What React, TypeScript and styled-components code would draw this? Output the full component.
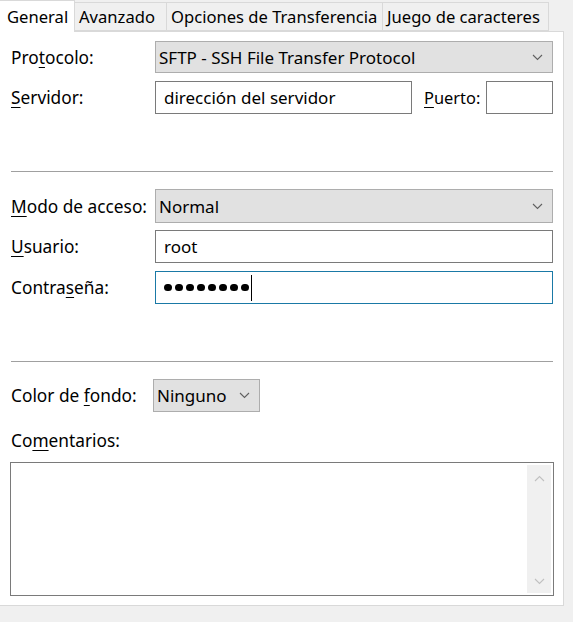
import styled, { createGlobalStyle } from 'styled-components';

const GlobalStyle = createGlobalStyle`
  html, body {
    margin: 0;
    padding: 0;
    background: #f0f0f0;
  }
  body {
    font-family: "Noto Sans", "Open Sans", "Liberation Sans", sans-serif;
    font-size: 17px;
    color: #000;
  }
`;

const Window = styled.div`
  width: 573px;
  height: 622px;
  background: #f0f0f0;
  display: flex;
  flex-direction: column;
  overflow: hidden;
`;

const TabBar = styled.div`
  display: flex;
  align-items: flex-end;
  height: 31px;
  position: relative;
  z-index: 1;
`;

const Tab = styled.div<{ $active?: boolean; $width: number }>`
  box-sizing: border-box;
  width: ${(p) => p.$width}px;
  height: ${(p) => (p.$active ? 32 : 29)}px;
  margin-bottom: ${(p) => (p.$active ? -1 : 0)}px;
  padding-left: ${(p) => (p.$active ? 7 : 4)}px;
  display: flex;
  align-items: center;
  background: ${(p) => (p.$active ? '#fff' : '#f0f0f0')};
  border: 1px solid #d9d9d9;
  border-left: ${(p) => (p.$active ? 'none' : '1px solid #d9d9d9')};
  border-bottom: ${(p) => (p.$active ? 'none' : '1px solid #d9d9d9')};
  margin-left: -1px;
  white-space: nowrap;
  font-size: 16.6px;
  color: #000;
  &:first-child {
    margin-left: 0;
  }
`;

const Panel = styled.div`
  box-sizing: border-box;
  width: 564px;
  height: 575px;
  background: #fff;
  border-top: 1px solid #d9d9d9;
  border-right: 1px solid #d9d9d9;
  border-bottom: 1px solid #d9d9d9;
  padding: 9px 10px 0 11px;
  display: flex;
  flex-direction: column;
`;

const Row = styled.div<{ $gap?: number; $height?: number }>`
  display: flex;
  align-items: center;
  height: ${(p) => p.$height ?? 33}px;
  margin-top: ${(p) => p.$gap ?? 0}px;
`;

const Label = styled.label<{ $width?: number }>`
  width: ${(p) => (p.$width ? `${p.$width}px` : 'auto')};
  flex: none;
  white-space: nowrap;
  font-size: 17.3px;
`;

const Key = styled.span`
  text-decoration: underline;
  text-underline-offset: 3px;
  text-decoration-thickness: 1px;
`;

const Combo = styled.div<{ $width?: number }>`
  box-sizing: border-box;
  height: 100%;
  flex: ${(p) => (p.$width ? 'none' : '1')};
  width: ${(p) => (p.$width ? `${p.$width}px` : 'auto')};
  background: #e1e1e1;
  border: 1px solid #adadad;
  display: flex;
  align-items: center;
  justify-content: space-between;
  padding: 0 9px 0 3px;
  font-size: 17px;
  white-space: nowrap;
`;

const TextBox = styled.div<{ $width?: number; $focused?: boolean }>`
  box-sizing: border-box;
  height: 100%;
  flex: ${(p) => (p.$width ? 'none' : '1')};
  width: ${(p) => (p.$width ? `${p.$width}px` : 'auto')};
  background: #fff;
  border: 1px solid ${(p) => (p.$focused ? '#1a79a6' : '#7a7a7a')};
  display: flex;
  align-items: center;
  padding: 0 8px;
  font-size: 17px;
  white-space: nowrap;
`;

const Dots = styled.div`
  display: flex;
  align-items: center;
  gap: 3.5px;
`;

const Dot = styled.span`
  width: 7.5px;
  height: 7.5px;
  border-radius: 50%;
  background: #000;
`;

const Caret = styled.span`
  width: 1px;
  height: 26px;
  background: #000;
  margin-left: 2px;
`;

const Separator = styled.hr<{ $top: number }>`
  border: none;
  border-top: 1px solid #a0a0a0;
  margin: ${(p) => p.$top}px 0 0 0;
  height: 0;
`;

const PortLabel = styled(Label)`
  margin: 0 6px 0 12px;
  font-size: 16.4px;
`;

const CommentsLabel = styled(Label)`
  margin-top: 17px;
  height: 24px;
  line-height: 24px;
`;

const CommentsBox = styled.div`
  box-sizing: border-box;
  margin: 9px -1px 0 -1px;
  height: 134px;
  border: 1px solid #7a7a7a;
  background: #fff;
  display: flex;
  justify-content: flex-end;
  padding: 2px 2px 2px 0;
`;

const ScrollTrack = styled.div`
  width: 24px;
  background: #f0f0f0;
  display: flex;
  flex-direction: column;
  justify-content: space-between;
  align-items: center;
  padding: 10px 0 8px;
`;

const Chevron = ({ up, color = '#606060' }: { up?: boolean; color?: string }) => (
  <svg width="11" height="7" viewBox="0 0 11 7" fill="none">
    <path
      d={up ? 'M1 6 L5.5 1.5 L10 6' : 'M1 1 L5.5 5.5 L10 1'}
      stroke={color}
      strokeWidth="1.1"
    />
  </svg>
);

export default function App() {
  return (
    <Window>
      <GlobalStyle />
      <TabBar>
        <Tab $active $width={75}>General</Tab>
        <Tab $width={93}>Avanzado</Tab>
        <Tab $width={217}>Opciones de Transferencia</Tab>
        <Tab $width={167}>Juego de caracteres</Tab>
      </TabBar>
      <Panel>
        <Row $height={32}>
          <Label $width={144}>
            Pro<Key>t</Key>ocolo:
          </Label>
          <Combo>
            <span>SFTP - SSH File Transfer Protocol</span>
            <Chevron />
          </Combo>
        </Row>
        <Row $gap={8}>
          <Label $width={144}>
            <Key>S</Key>ervidor:
          </Label>
          <TextBox $width={257}>dirección del servidor</TextBox>
          <PortLabel>
            <Key>P</Key>uerto:
          </PortLabel>
          <TextBox />
        </Row>
        <Separator $top={57} />
        <Row $gap={17} $height={34}>
          <Label $width={144}>
            <Key>M</Key>odo de acceso:
          </Label>
          <Combo>
            <span>Normal</span>
            <Chevron />
          </Combo>
        </Row>
        <Row $gap={7}>
          <Label $width={144}>
            <Key>U</Key>suario:
          </Label>
          <TextBox>root</TextBox>
        </Row>
        <Row $gap={8}>
          <Label $width={144}>
            Contra<Key>s</Key>eña:
          </Label>
          <TextBox $focused>
            <Dots>
              {Array.from({ length: 8 }).map((_, i) => (
                <Dot key={i} />
              ))}
            </Dots>
            <Caret />
          </TextBox>
        </Row>
        <Separator $top={57} />
        <Row $gap={17}>
          <Label $width={142}>
            Color de <Key>f</Key>ondo:
          </Label>
          <Combo $width={107}>
            <span>Ninguno</span>
            <Chevron />
          </Combo>
        </Row>
        <CommentsLabel>
          Co<Key>m</Key>entarios:
        </CommentsLabel>
        <CommentsBox>
          <ScrollTrack>
            <Chevron up color="#c0c0c0" />
            <Chevron color="#c0c0c0" />
          </ScrollTrack>
        </CommentsBox>
      </Panel>
    </Window>
  );
}
